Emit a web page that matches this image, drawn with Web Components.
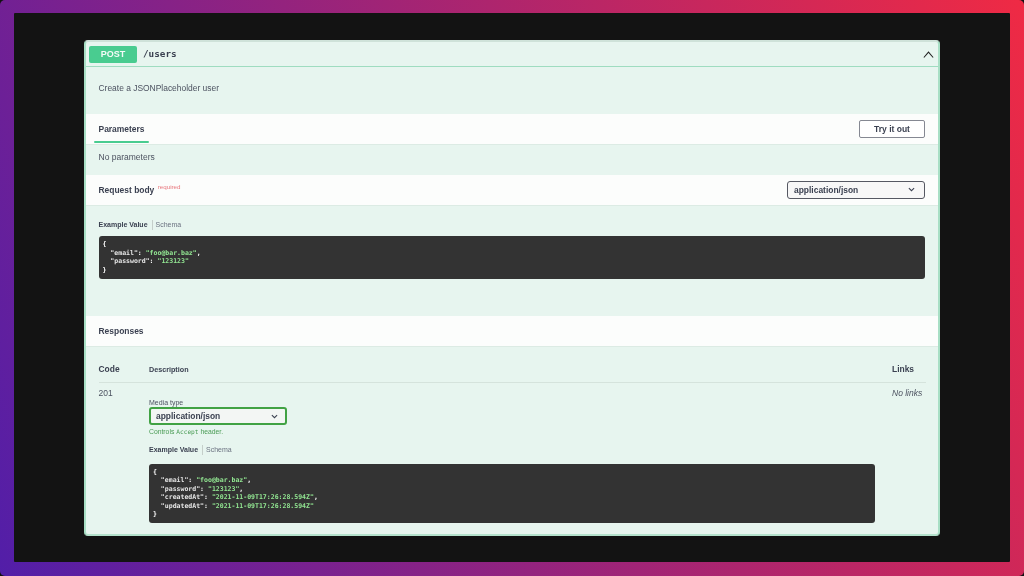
<!doctype html>
<html>
<head>
<meta charset="utf-8">
<title>POST /users</title>
<style>
  html, body { margin: 0; height: 100%; }
  body { font-family: "Liberation Sans", sans-serif; background: #111; }
</style>
</head>
<body>
<gradient-frame>
  <op-block method="POST" path="/users">
    <op-desc>Create a JSONPlaceholder user</op-desc>

    <section-bar>
      <op-tab>Parameters</op-tab>
      <try-button slot="end">Try it out</try-button>
    </section-bar>
    <op-note>No parameters</op-note>

    <section-bar>
      <bar-title>Request body<sup-req>required</sup-req></bar-title>
      <type-select slot="end">application/json</type-select>
    </section-bar>
    <body-example>
      <example-tabs></example-tabs>
      <code-block><div>{</div><div>  <k>"email"</k>: <s>"foo@bar.baz"</s>,</div><div>  <k>"password"</k>: <s>"123123"</s></div><div>}</div></code-block>
    </body-example>

    <section-bar>
      <bar-title>Responses</bar-title>
    </section-bar>
    <responses-table>
      <media-picker></media-picker>
      <example-tabs></example-tabs>
      <code-block class="tall"><div>{</div><div>  <k>"email"</k>: <s>"foo@bar.baz"</s>,</div><div>  <k>"password"</k>: <s>"123123"</s>,</div><div>  <k>"createdAt"</k>: <s>"2021-11-09T17:26:28.594Z"</s>,</div><div>  <k>"updatedAt"</k>: <s>"2021-11-09T17:26:28.594Z"</s></div><div>}</div></code-block>
    </responses-table>
  </op-block>
</gradient-frame>

<script>
// tiny helper, every element here is just a style + some markup
function el(name, html) {
  customElements.define(name, class extends HTMLElement {
    constructor() {
      super();
      const src = typeof html === "function" ? html(this) : html;
      // trim: code-block is white-space: pre, stray whitespace would show up
      this.attachShadow({ mode: "open" }).innerHTML = src.trim();
    }
  });
}

const chevron = (w, h, sw) => `<svg width="${w}" height="${h}" viewBox="0 0 12 8" fill="none" stroke="#3b4151" stroke-width="${sw}"><path d="M1.5 1.5 6 6l4.5-4.5"/></svg>`;

el("gradient-frame", `
  <style>
    :host { display: block; box-sizing: border-box; width: 1024px; height: 576px; padding: 13px 14px 14px 14px; border-radius: 5px;
      background: linear-gradient(66deg, #521ea8 0%, #ef2a44 100%); overflow: hidden; }
    .inner { box-sizing: border-box; height: 100%; background: #131313; padding: 27px 70px 26px 70px; border-radius: 1px; }
  </style>
  <div class="inner"><slot></slot></div>`);

el("op-block", (h) => `
  <style>
    :host { display: block; box-sizing: border-box; height: 496px; background: #e7f5ef; border: 2px solid #cfe2d9;
      border-left-color: #a8dfc5; border-right-color: #a8dfc5; border-bottom-color: #b4e2cc;
      border-radius: 4px; overflow: hidden; color: #3b4151; filter: blur(.3px); }
    header { display: flex; align-items: center; height: 25px; box-sizing: border-box; padding: 0 3px; border-bottom: 1px solid #9fdcc0; }
    .m { width: 48px; height: 17px; background: #49cc90; border-radius: 2px; color: #f4fbf7; font: 700 9px/16px "Liberation Sans", sans-serif; text-align: center; }
    .p { margin-left: 6px; margin-top: -1px; font: 700 9.3px "DejaVu Sans Mono", monospace; color: #3b4151; flex: 1; }
    svg { margin-right: 1px; }
  </style>
  <header>
    <span class="m">${h.getAttribute("method")}</span>
    <span class="p">${h.getAttribute("path")}</span>
    <svg width="11" height="7" viewBox="0 0 12 8" fill="none" stroke="#222" stroke-width="1.2"><path d="M.7 7.4 6 1.2l5.3 6.2"/></svg>
  </header>
  <slot></slot>`);

el("op-desc", `
  <style>:host { display: block; height: 47px; box-sizing: border-box; padding: 15px 12.5px 0; font-size: 8.45px; line-height: 12px; color: #4c5260; }</style>
  <slot></slot>`);

el("section-bar", `
  <style>
    :host { display: flex; align-items: center; justify-content: space-between; box-sizing: border-box; height: 31px;
      padding: 0 13px 0 12.5px; background: #fcfdfc; border-bottom: 1px solid #dcebe4; }
  </style>
  <div><slot></slot></div><slot name="end"></slot>`);

el("op-tab", `
  <style>
    :host { display: block; position: relative; font: 700 8.45px/12px "Liberation Sans", sans-serif; color: #3b4151; }
    :host::after { content: ""; position: absolute; left: -4.5px; width: 55px; height: 2.4px; top: 17.5px; background: #49cc90; border-radius: 1px; }
  </style><slot></slot>`);

el("bar-title", `
  <style>:host { display: block; padding-bottom: 1px; font: 700 8.45px/12px "Liberation Sans", sans-serif; color: #3b4151; }</style><slot></slot>`);

el("sup-req", `
  <style>:host { display: inline-block; position: relative; top: -4px; margin-left: 3.5px; font: 400 6.2px "Liberation Sans", sans-serif; color: #e8777d; }</style><slot></slot>`);

el("try-button", `
  <style>:host { display: block; box-sizing: border-box; width: 66px; height: 18.5px; border: 1px solid #858892; border-radius: 2px;
    text-align: center; font: 700 8.5px/16.5px "Liberation Sans", sans-serif; color: #3b4151; background: #fff; }</style><slot></slot>`);

el("type-select", `
  <style>:host { display: flex; align-items: center; justify-content: space-between; box-sizing: border-box; width: 138px; height: 18px;
    padding: 0 9px 1px 6px; border: 1.5px solid #555862; border-radius: 3px; background: #f7f7f7;
    font: 700 8.45px "Liberation Sans", sans-serif; color: #3b4151; }</style>
  <slot></slot>${chevron(7, 5, 1.8)}`);

el("op-note", `
  <style>:host { display: block; height: 30px; box-sizing: border-box; padding: 6px 12.5px 0; font-size: 8.5px; line-height: 12px; color: #4c5260; }</style>
  <slot></slot>`);

el("body-example", `
  <style>:host { display: block; height: 110px; box-sizing: border-box; padding: 13.5px 13px 0 12.5px; }</style>
  <slot></slot>`);

el("example-tabs", `
  <style>
    :host { display: flex; align-items: center; height: 10px; font: 7px/10px "Liberation Sans", sans-serif; color: #6b7280; }
    b { color: #3b4151; font-weight: 700; padding-right: 4px; border-right: 1px solid #c5cfca; }
    span { padding-left: 3px; }
  </style>
  <b>Example Value</b><span>Schema</span>`);

el("code-block", `
  <style>
    :host { display: block; box-sizing: border-box; margin-top: 6.5px; height: 43px; padding: 4px 4px; background: #333; border-radius: 3px;
      font: 700 6.52px/8.5px "DejaVu Sans Mono", monospace; color: #fff; white-space: pre; }
    :host(.tall) { height: 59px; margin-top: 8.5px; line-height: 8.6px; }
    ::slotted(div) { height: 8.5px; }
  </style><slot></slot>`);

el("media-picker", `
  <style>
    :host { display: block; font-family: "Liberation Sans", sans-serif; }
    .l { font-size: 7px; line-height: 9px; color: #4c5260; margin-bottom: .5px; }
    .s { display: flex; align-items: center; justify-content: space-between; box-sizing: border-box; width: 138px; height: 18px;
      padding: 0 7px 0 5px; border: 2px solid #41a244; border-radius: 3px; background: #f3f6f4; font: 700 8.45px "Liberation Sans", sans-serif; color: #3b4151; }
    .h { font-size: 6.8px; line-height: 9px; height: 9px; margin-top: 2px; color: #4a9c55; }
    code { font: 400 6.2px/1 "DejaVu Sans Mono", monospace; }
  </style>
  <div class="l">Media type</div>
  <div class="s"><span>application/json</span>${chevron(7, 5, 1.8)}</div>
  <div class="h">Controls <code>Accept</code> header.</div>`);

el("responses-table", `
  <style>
    :host { display: block; box-sizing: border-box; padding: 13px 12.5px 0; height: 190px; }
    .row { display: grid; grid-template-columns: 50.5px 1fr 33.5px; }
    .head { height: 22px; border-bottom: 1px solid #d5e3dc; font: 700 8.45px/19px "Liberation Sans", sans-serif; color: #3b4151; }
    .head .d { font-size: 7.2px; }
    .code { font-size: 8.5px; line-height: 12px; padding-top: 4px; color: #4c5260; }
    .links { font-size: 8.5px; line-height: 12px; padding-top: 4px; font-style: italic; color: #4c5260; }
    .mid { padding: 14.5px 17px 0 0; }
    ::slotted(example-tabs) { margin-top: 9px; }
  </style>
  <div class="row head"><div>Code</div><div class="d">Description</div><div>Links</div></div>
  <div class="row">
    <div class="code">201</div>
    <div class="mid"><slot></slot></div>
    <div class="links">No links</div>
  </div>`);
</script>
<style>
  /* the json tokens live in the light DOM, so they get plain page rules */
  k { color: #e6e6e6; }
  s { color: #93e893; text-decoration: none; }
</style>
</body>
</html>
